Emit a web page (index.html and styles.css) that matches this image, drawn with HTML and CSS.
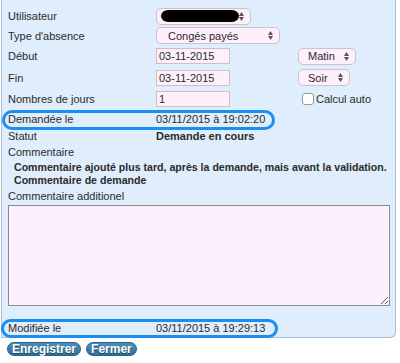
FILE: index.html
```html
<!DOCTYPE html>
<html lang="fr">
<head>
    <meta charset="UTF-8">
    <title>Absence</title>
    <link rel="stylesheet" href="styles.css">
</head>
<body>
    <div id="panel">
        <div class="row r1">
            <span class="lbl">Utilisateur</span>
            <span class="sel sel-user"><span class="blob"></span><svg class="arr" width="5" height="9" viewBox="0 0 5 9"><path d="M0 4 L2.5 0 L5 4 Z M0 5 L2.5 9 L5 5 Z" fill="#555"/></svg></span>
        </div>
        <div class="row r2">
            <span class="lbl">Type d'absence</span>
            <span class="sel sel-type"><span class="txt">Congés payés</span><svg class="arr" width="5" height="9" viewBox="0 0 5 9"><path d="M0 4 L2.5 0 L5 4 Z M0 5 L2.5 9 L5 5 Z" fill="#555"/></svg></span>
        </div>
        <div class="row r3">
            <span class="lbl">Début</span>
            <input class="inp" type="text" value="03-11-2015">
            <span class="sel sel-half sel-matin"><span class="txt">Matin</span><svg class="arr" width="5" height="9" viewBox="0 0 5 9"><path d="M0 4 L2.5 0 L5 4 Z M0 5 L2.5 9 L5 5 Z" fill="#555"/></svg></span>
        </div>
        <div class="row r4">
            <span class="lbl">Fin</span>
            <input class="inp" type="text" value="03-11-2015">
            <span class="sel sel-half sel-soir"><span class="txt">Soir</span><svg class="arr" width="5" height="9" viewBox="0 0 5 9"><path d="M0 4 L2.5 0 L5 4 Z M0 5 L2.5 9 L5 5 Z" fill="#555"/></svg></span>
        </div>
        <div class="row r5">
            <span class="lbl">Nombres de jours</span>
            <input class="inp" type="text" value="1">
            <label class="chk"><input type="checkbox">Calcul auto</label>
        </div>
        <div class="row mark r6">
            <span class="lbl">Demandée le</span>
            <span class="val">03/11/2015 à 19:02:20</span>
        </div>
        <div class="row r7">
            <span class="lbl">Statut</span>
            <span class="val bold">Demande en cours</span>
        </div>
        <div class="row r8">
            <span class="lbl">Commentaire</span>
        </div>
        <div class="comment">
            Commentaire ajouté plus tard, après la demande, mais avant la validation.<br>
            Commentaire de demande
        </div>
        <div class="row r9">
            <span class="lbl">Commentaire additionel</span>
        </div>
        <textarea class="area"></textarea>
        <div class="row mark r10">
            <span class="lbl">Modifiée le</span>
            <span class="val">03/11/2015 à 19:29:13</span>
        </div>
    </div>
    <div class="btns">
        <button class="btn">Enregistrer</button>
        <button class="btn">Fermer</button>
    </div>
</body>
</html>
```

FILE: styles.css
```css
*{
    margin: 0;
    padding: 0;
    box-sizing: border-box;
}
body{
    font-family: "Liberation Sans", Arial, sans-serif;
    font-size: 11px;
    color: #2b2b2b;
    background: #fff;
}
#panel{
    width: 395px;
    margin-left: 1px;
    padding: 6px 0 0 6px;
    background: #dfedfc;
    border: 1px solid #a9bdd3;
    border-top: none;
    border-radius: 0 0 6px 0;
}
.row{
    display: flex;
    align-items: center;
    height: 21px;
}
.r1{ height: 20px; }
.r2{ height: 19px; }
.r3{ height: 22px; }
.r6{ height: 20px; }
.r7{ height: 14px; }
.r8{ height: 18px; }
.r9{ height: 17px; }
.r10{
    height: 18px;
    margin-top: 13px;
}
.lbl{
    flex: none;
    width: 148px;
}
.val{
    white-space: nowrap;
}
.bold{
    font-weight: bold;
}
/* contour bleu autour des lignes de date */
.mark{
    position: relative;
}
.mark::after{
    content: '';
    box-sizing: border-box;
    position: absolute;
    left: -6px;
    top: 1px;
    width: 273px;
    height: 20px;
    border: 3px solid #1b8ef2;
    border-radius: 10px;
}
.r10::after{
    left: -7px;
    top: 0;
    width: 277px;
    height: 19px;
}
.sel{
    display: inline-flex;
    align-items: center;
    justify-content: space-between;
    height: 17px;
    padding: 0 6px 0 4px;
    background: #fdeffb;
    border: 1px solid #c9c3cf;
    border-radius: 5px;
}
.sel .txt{
    padding-left: 7px;
}
.sel-user{
    width: 95px;
}
.blob{
    display: block;
    width: 78px;
    height: 12px;
    background: #000;
    border-radius: 7px / 6px;
}
.sel-type{
    width: 124px;
}
.sel-half{
    margin-left: 68px;
    padding-left: 2px;
}
.sel-matin{
    width: 58px;
}
.sel-soir{
    width: 52px;
}
.inp{
    width: 74px;
    height: 16px;
    padding: 0 2px;
    font: inherit;
    color: #2b2b2b;
    background: #fdf0fb;
    border: 1px solid #d1bccb;
    outline: none;
}
.chk{
    display: flex;
    align-items: center;
    margin-left: 72px;
}
.chk input{
    -webkit-appearance: none;
    appearance: none;
    width: 12px;
    height: 12px;
    margin-right: 2px;
    background: #fff;
    border: 1px solid #999;
    border-radius: 3px;
}
.comment{
    padding-left: 6px;
    font-size: 10.6px;
    line-height: 13px;
    font-weight: bold;
    white-space: nowrap;
}
.area{
    display: block;
    width: 382px;
    height: 101px;
    margin-top: 1px;
    background: #fdf0fc;
    border: 1px solid #8a8a8a;
    resize: both;
}
.btns{
    padding: 4px 0 0 7px;
}
.btn{
    height: 14px;
    padding: 0 4px;
    margin-right: 2px;
    font-family: "Liberation Sans", Arial, sans-serif;
    font-size: 12px;
    font-weight: bold;
    line-height: 12px;
    color: #fff;
    text-shadow: 0 1px 0 #1d4560;
    background: linear-gradient(#4b8fb8, #2f6f98);
    border: 1px solid #28618a;
    border-radius: 7px;
    cursor: pointer;
}
```
